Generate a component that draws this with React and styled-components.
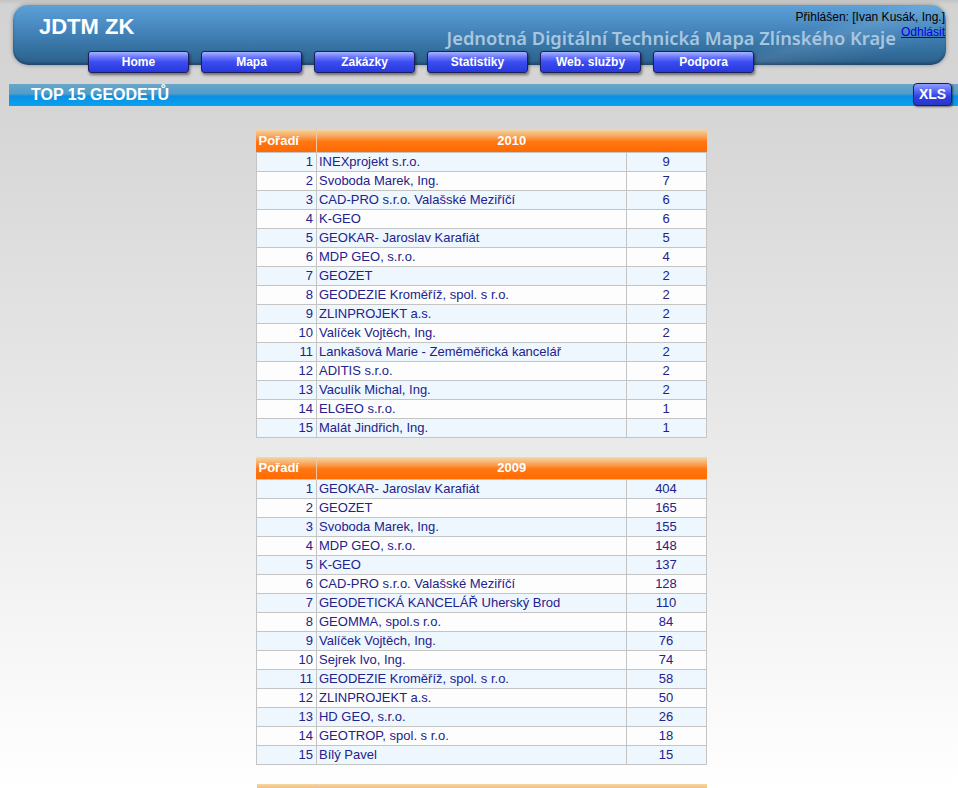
import styled, { createGlobalStyle } from 'styled-components';

const GlobalStyle = createGlobalStyle`
    html, body {
        margin: 0;
        padding: 0;
    }
    body {
        font-family: "Liberation Sans", Arial, sans-serif;
        font-size: 13px;
        background: linear-gradient(to bottom, #c4c4c4 0px, #d3d3d3 5px, #d6d6d6 120px, #ffffff 790px);
        background-repeat: no-repeat;
        min-height: 788px;
    }
`

const Page = styled.div`
    padding-top: 5px;
`

const Header = styled.div`
    padding-left: 13px;
`

const Banner = styled.div`
    position: relative;
    width: 933px;
    height: 60px;
    box-sizing: border-box;
    border-radius: 15px;
    background:
        linear-gradient(162deg, transparent 78%, rgba(255,255,255,0.09) 82%, transparent 92%),
        linear-gradient(to bottom, #5ba1d8 0%, #4686bd 40%, #34709f 75%, #2b5e8b 100%);
    box-shadow: 0 0 4px rgba(0,0,0,0.35), inset 0 -2px 3px rgba(0,0,0,0.25);
    display: flex;
    padding-right: 1px;
`

const Logo = styled.div`
    color: #fff;
    font-weight: bold;
    font-size: 22px;
    padding: 9px 0 0 26px;
    line-height: 26px;
`

const BannerRight = styled.div`
    flex: 1;
    display: flex;
    flex-direction: column;
    align-items: flex-end;
`

const UserLine = styled.div`
    margin-top: 5px;
    font-size: 12px;
    line-height: 14px;
    color: #000;
`

const TitleRow = styled.div`
    display: flex;
    align-items: flex-start;
`

const SiteTitle = styled.div`
    font-family: "Noto Sans", "Open Sans", sans-serif;
    font-weight: 600;
    font-size: 18.3px;
    line-height: 24px;
    color: #a9c6df;
    margin-right: 5px;
    margin-top: 2px;
`

const Logout = styled.a`
    font-size: 12px;
    line-height: 14px;
    color: #0000ee;
    text-decoration: underline;
    margin-top: 1px;
`

const Nav = styled.div`
    position: relative;
    display: flex;
    gap: 12px;
    margin: -14px 0 0 75px;
`

const NavButton = styled.div`
    width: 101px;
    height: 22px;
    box-sizing: border-box;
    border: 1px solid #1c1f5c;
    border-radius: 3px;
    background: linear-gradient(to bottom, #a9b3ff 0%, #6a78fa 25%, #3b4cf0 50%, #2f40e6 80%, #2838d8 100%);
    box-shadow: 1px 2px 3px rgba(0,0,0,0.5);
    color: #fff;
    font-weight: bold;
    font-size: 12px;
    line-height: 20px;
    text-align: center;
`

const TitleBar = styled.div`
    margin: 11px 0 0 9px;
    height: 22px;
    display: flex;
    align-items: center;
    justify-content: space-between;
    background: linear-gradient(to bottom, #6aa6c8 0%, #4f9ccb 45%, #0b8fe0 55%, #09a2f2 100%);
`

const BarTitle = styled.div`
    color: #fff;
    font-weight: bold;
    font-size: 16px;
    padding-left: 22px;
`

const XlsButton = styled.div`
    margin-right: 6px;
    width: 39px;
    height: 23px;
    margin-top: -1px;
    box-sizing: border-box;
    border: 1px solid #1b1e5a;
    border-radius: 4px;
    background: linear-gradient(to bottom, #8e9cff 0%, #4e5ff2 40%, #2f40e0 60%, #2a36c8 100%);
    box-shadow: 1px 1px 2px rgba(0,0,0,0.5);
    color: #fff;
    font-weight: bold;
    font-size: 14px;
    line-height: 20px;
    text-align: center;
`

const Content = styled.div`
    padding: 23px 0 0 5px;
    display: flex;
    flex-direction: column;
    align-items: center;
    gap: 19px;
`

const Table = styled.table`
    width: 450px;
    border-collapse: collapse;
    table-layout: fixed;
`

const HeadCell = styled.th`
    height: 23px;
    padding: 0 2px;
    box-sizing: border-box;
    color: #fff;
    font-weight: bold;
    font-size: 13px;
    text-align: ${props => props.align || 'center'};
    background: linear-gradient(to bottom, #f2d9a6 0%, #f8a860 30%, #ff7612 55%, #ff6a00 100%);
    border-left: ${props => props.sep ? '1px solid #f0c8a0' : 'none'};
`

const Row = styled.tr`
    background: ${props => props.odd ? '#eef6fe' : '#fdfdfd'};
`

const Cell = styled.td`
    height: 18px;
    padding: 0 3px 0 2px;
    border: 1px solid #c4c4c4;
    color: #22228c;
    font-size: 13px;
    line-height: 16px;
    white-space: nowrap;
    overflow: hidden;
    text-align: ${props => props.align || 'left'};
`

const tables = [
    {
        year: '2010',
        rows: [
            ['INEXprojekt s.r.o.', 9],
            ['Svoboda Marek, Ing.', 7],
            ['CAD-PRO s.r.o. Valašské Meziříčí', 6],
            ['K-GEO', 6],
            ['GEOKAR- Jaroslav Karafiát', 5],
            ['MDP GEO, s.r.o.', 4],
            ['GEOZET', 2],
            ['GEODEZIE Kroměříž, spol. s r.o.', 2],
            ['ZLINPROJEKT a.s.', 2],
            ['Valíček Vojtěch, Ing.', 2],
            ['Lankašová Marie - Zeměměřická kancelář', 2],
            ['ADITIS s.r.o.', 2],
            ['Vaculík Michal, Ing.', 2],
            ['ELGEO s.r.o.', 1],
            ['Malát Jindřich, Ing.', 1],
        ],
    },
    {
        year: '2009',
        rows: [
            ['GEOKAR- Jaroslav Karafiát', 404],
            ['GEOZET', 165],
            ['Svoboda Marek, Ing.', 155],
            ['MDP GEO, s.r.o.', 148],
            ['K-GEO', 137],
            ['CAD-PRO s.r.o. Valašské Meziříčí', 128],
            ['GEODETICKÁ KANCELÁŘ Uherský Brod', 110],
            ['GEOMMA, spol.s r.o.', 84],
            ['Valíček Vojtěch, Ing.', 76],
            ['Sejrek Ivo, Ing.', 74],
            ['GEODEZIE Kroměříž, spol. s r.o.', 58],
            ['ZLINPROJEKT a.s.', 50],
            ['HD GEO, s.r.o.', 26],
            ['GEOTROP, spol. s r.o.', 18],
            ['Bílý Pavel', 15],
        ],
    },
    {
        // next block is cut off by the bottom edge, only its header top shows
        year: '',
        rows: [],
    },
]

const menu = ['Home', 'Mapa', 'Zakázky', 'Statistiky', 'Web. služby', 'Podpora']

const App = () => {
    return (
        <Page>
            <GlobalStyle />
            <Header>
                <Banner>
                    <Logo>JDTM ZK</Logo>
                    <BannerRight>
                        <UserLine>Přihlášen: [Ivan Kusák, Ing.]</UserLine>
                        <TitleRow>
                            <SiteTitle>Jednotná Digitální Technická Mapa Zlínského Kraje</SiteTitle>
                            <Logout href="#">Odhlásit</Logout>
                        </TitleRow>
                    </BannerRight>
                </Banner>
                <Nav>
                    {menu.map(item => <NavButton key={item}>{item}</NavButton>)}
                </Nav>
            </Header>
            <TitleBar>
                <BarTitle>TOP 15 GEODETŮ</BarTitle>
                <XlsButton>XLS</XlsButton>
            </TitleBar>
            <Content>
                {tables.map((t, n) => (
                    <Table key={n}>
                        <colgroup>
                            <col style={{ width: 60 }} />
                            <col style={{ width: 310 }} />
                            <col style={{ width: 80 }} />
                        </colgroup>
                        <thead>
                            <tr>
                                <HeadCell align="left">{t.year && 'Pořadí'}</HeadCell>
                                <HeadCell colSpan={2} sep>{t.year}</HeadCell>
                            </tr>
                        </thead>
                        <tbody>
                            {t.rows.map((r, i) => (
                                <Row key={i} odd={i % 2 === 0}>
                                    <Cell align="right">{i + 1}</Cell>
                                    <Cell>{r[0]}</Cell>
                                    <Cell align="center">{r[1]}</Cell>
                                </Row>
                            ))}
                        </tbody>
                    </Table>
                ))}
            </Content>
        </Page>
    )
}

export default App
